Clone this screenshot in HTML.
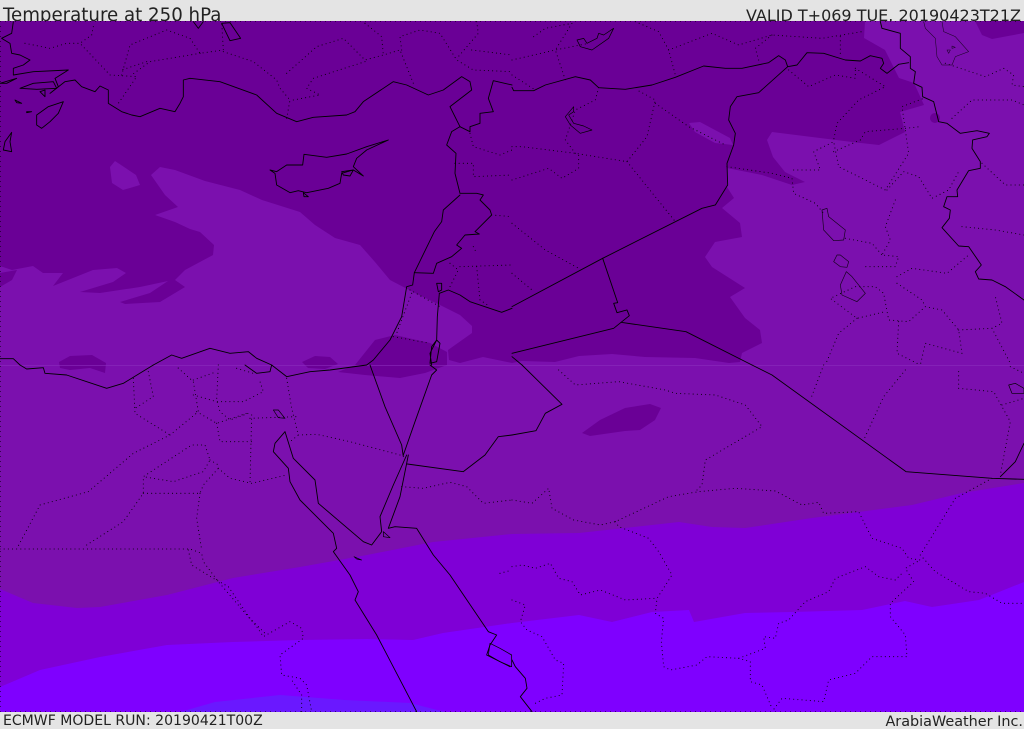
<!DOCTYPE html>
<html><head><meta charset="utf-8"><style>
html,body{margin:0;padding:0;background:#e4e4e4}
#p{position:relative;width:1024px;height:729px;overflow:hidden;background:#e4e4e4;font-family:"DejaVu Sans","Liberation Sans",sans-serif;color:#222}
.t{position:absolute;white-space:nowrap;line-height:1}
svg{position:absolute;left:0;top:21px}
</style></head><body><div id="p">
<div class="t" style="left:3px;top:7px;font-size:18.2px">Temperature at 250 hPa</div>
<div class="t" style="right:3px;top:8px;font-size:16px">VALID T+069 TUE. 20190423T21Z</div>
<div class="t" style="left:3px;top:714px;font-size:14.05px">ECMWF MODEL RUN: 20190421T00Z</div>
<div class="t" style="right:1px;top:715px;font-size:14.4px">ArabiaWeather Inc.</div>
<svg width="1024" height="691" viewBox="0 21 1024 691">
<rect x="0" y="21" width="1024" height="691" fill="#7f00ff"/>
<path fill="#6a18ff" d="M180,712 L215,702 L280,695 L345,700 L410,703 L445,712Z"/>
<path fill="#7f00d6" d="M0,21 H1024 V582 L979,600 L932,607 L905,601 L862,610 L792,612 L745,613 L694,622 L689,610 L652,612 L612,622 L579,615 L512,623 L443,633 L413,640 L367,639 L300,640 L233,642 L167,645 L100,657 L40,670 L0,687Z"/>
<path fill="#7b10ae" d="M0,21 H1024 V483 L962,493 L912,505 L812,518 L745,528 L712,527 L679,522 L579,533 L512,534 L433,542 L367,555 L300,567 L233,578 L167,595 L100,607 L77,608 L33,603 L0,589Z"/>
<path fill="#6a0096" d="M0,21 H865 L864,38 L885,50 L899,78 L914,83 L924,105 L900,112 L905,132 L879,145 L852,142 L812,137 L772,132 L767,140 L773,157 L785,172 L805,182 L792,185 L762,175 L727,168 L727,187 L734,198 L722,208 L740,223 L742,237 L715,242 L705,257 L712,267 L745,288 L730,297 L745,318 L760,330 L762,343 L742,353 L740,362 L729,363 L695,358 L645,357 L612,354 L579,356 L555,362 L522,361 L512,363 L483,357 L460,363 L449,360 L448,350 L472,333 L472,326 L460,315 L440,305 L415,293 L390,280 L375,262 L360,245 L335,238 L315,225 L300,212 L262,200 L240,190 L205,181 L175,170 L160,167 L151,175 L165,195 L178,207 L155,215 L175,222 L190,229 L200,232 L214,245 L213,255 L185,270 L175,280 L185,287 L160,302 L125,304 L120,302 L150,293 L168,281 L140,287 L100,293 L80,292 L113,282 L126,273 L117,268 L93,270 L53,286 L63,273 L43,273 L33,266 L12,270 L0,266Z"/>
<path fill="#6a0096" d="M0,273 L17,270 L12,280 L0,287Z"/>
<path fill="#6a0096" d="M59,362 L70,356 L92,355 L106,363 L105,373 L90,368 L70,370 L60,368Z"/>
<path fill="#6a0096" d="M302,362 L315,356 L330,357 L338,364 L325,369 L308,368Z"/>
<path fill="#6a0096" d="M338,372 L355,365 L375,340 L395,335 L430,343 L447,352 L447,365 L425,373 L400,378 L365,375Z"/>
<path fill="#6a0096" d="M582,433 L600,420 L625,408 L650,404 L661,408 L655,420 L640,430 L625,431 L590,436Z"/>
<path fill="#6a0096" d="M975,21 H1024 V33 L992,39 L982,35Z"/>
<ellipse cx="935" cy="118" rx="5" ry="5" fill="#6a0096"/>
<path fill="#7b10ae" d="M115,161 L136,175 L140,185 L123,190 L112,183 L110,167Z"/>
<path fill="#7b10ae" d="M689,123 L700,122 L730,138 L733,145 L715,143 L695,132Z"/>
<rect x="0" y="365" width="1024" height="1" fill="#8c2fc0" opacity=".55"/>

<g fill="none" stroke="#000" stroke-linejoin="round" stroke-linecap="round" transform="scale(.33333)" stroke-width="2.7">
<path d="M40,65 L35,100 L5,115 L30,130 L35,160 L60,165 L90,180 L70,195 L40,205 L40,225 L100,215 L205,210 L165,235 L175,260 L150,280 L195,245 L225,240 L245,260 L285,275 L300,258 L325,270 L325,310 L365,335 L395,345 L420,350 L480,325 L525,335 L540,310 L550,290 L550,240 L570,235 L660,245 L770,285 L830,340 L890,365 L940,352 L1040,345 L1065,335 L1090,305 L1180,245 L1220,255 L1285,285 L1330,270 L1385,230 L1410,245 L1415,270 L1350,320 L1380,380"/>
<path d="M190,305 L145,320 L110,345 L110,375 L125,385 L150,365 L175,340Z"/>
<path d="M60,265 L100,250 L160,245 L170,265 L110,268Z M0,250 L50,235 L20,250Z M120,275 L135,270 L135,290Z M45,300 L65,310 L50,308Z M80,335 L95,335 L80,338Z M35,397 L15,425 L10,450 L35,455 L30,425Z"/>
<path d="M810,510 L825,520 L830,555 L870,578 L895,572 L920,578 L985,565 L1020,550 L1025,520 L1060,510 L1090,528 L1060,500 L1070,475 L1100,450 L1165,420 L1100,440 L1040,462 L980,472 L912,463 L908,495 L860,495 L830,515Z"/>
<path d="M1025,515 L1060,510 L1050,528 L1030,525Z M910,578 L925,590 L912,590Z"/>
<path d="M1380,380 L1355,395 L1340,435 L1368,460 L1365,520 L1380,580 L1430,580 L1450,585 L1440,600 L1470,630 L1475,645 L1425,695 L1438,702 L1395,705 L1370,735 L1385,745 L1355,770 L1310,790 L1300,820 L1243,818"/>
<path d="M1380,585 L1330,630 L1325,665 L1303,695 L1243,818 L1238,855 L1220,860 L1205,950 L1170,1020 L1120,1080 L1100,1095"/>
<path d="M1318,880 L1312,950 L1310,1020 L1290,1060 L1295,1095 M1310,850 L1325,850 L1325,870 L1315,875Z M1310,1020 L1295,1040 L1290,1090 L1310,1085 L1320,1030Z"/>
<path d="M1318,880 L1345,870 L1380,885 L1410,905 L1505,937 L1536,925"/>
<path d="M1380,380 L1410,395 L1410,380 L1440,370 L1440,340 L1480,335 L1465,295 L1480,242 L1536,255"/>
<path d="M0,1076 L40,1076 L60,1095 M460,1095 L515,1065 L545,1075 L630,1045 L690,1060 L745,1055 L770,1075 L815,1095"/>
<path d="M665,70 L690,68 L722,115 L690,122Z M580,65 L595,85 L610,65"/>
</g>

<g fill="none" stroke="#000" stroke-linejoin="round" stroke-linecap="round" transform="translate(512,0) scale(.33333)" stroke-width="2.7">
<path d="M0,262 L5,272 L65,272 L100,255 L190,230 L235,240 L260,263 L340,268 L420,255 L490,232 L575,198 L640,205 L690,205 L770,188 L800,167 L820,180 L827,200 L855,195 L885,158 L935,160 L1000,180 L1045,183 L1075,167 L1110,175 L1115,190 L1105,205 L1125,220 L1160,193 L1190,188"/>
<path d="M1105,65 L1110,85 L1165,100 L1165,145 L1195,170 L1195,205 L1210,215 L1205,250 L1230,262 L1232,290 L1265,305 L1280,365 L1305,370 L1345,400 L1395,392 L1432,400 L1425,410 L1382,420 L1380,445 L1405,485 L1405,505 L1370,512 L1335,570 L1337,590 L1305,590 L1295,620 L1315,630 L1312,655 L1290,683 L1340,738 L1370,740 L1408,795 L1390,815 L1400,837 L1440,840 L1480,860 L1536,900"/>
<path d="M827,200 L740,278 L675,290 L655,320 L650,360 L670,400 L665,435 L645,490 L647,555 L610,615 L570,625 L272,775 L0,920"/>
<path d="M272,775 L317,908 L305,910 L315,938 L345,930 L352,947 L305,985 L0,1060 M327,967 L522,995 L720,1095 M0,1070 L30,1095"/>
<path d="M185,320 L160,350 L175,375 L205,400 L240,390 L215,378 L185,370 L170,345 L185,335Z" stroke-width="2"/>
<path d="M195,120 L215,115 L225,130 L255,115 L260,100 L275,105 L305,85 L290,115 L240,150 L205,140Z" stroke-width="2.2"/>
<path d="M1290,65 L1295,95 L1330,110 L1370,155 L1330,170 L1320,195 L1290,195 L1275,170 L1270,115 L1240,85 L1235,65 M1305,150 L1315,150 L1310,160Z M1320,138 L1330,142 L1320,145Z" stroke-width="1.6" opacity=".8"/>
<path d="M930,630 L945,625 L950,650 L1000,690 L995,720 L965,722 L935,690Z M975,765 L985,765 L1010,785 L1005,802 L985,800 L965,785Z M1003,815 L985,855 L990,885 L1035,905 L1060,880 L1020,830Z" stroke-width="2" opacity=".85"/>
</g>

<g fill="none" stroke="#000" stroke-linejoin="round" stroke-linecap="round" transform="translate(0,365) scale(.33333)" stroke-width="2.7">
<path d="M60,0 L80,12 L130,8 L135,25 L200,30 L320,70 L370,55 L460,0 M735,0 L770,25 L810,20 L815,0 L860,35 L930,20 L990,15 L1100,0"/>
<path d="M1110,0 L1155,125 L1205,240 L1210,275"/>
<path d="M855,200 L825,235 L820,260 L865,310 L870,350 L900,405 L1000,505 L1010,550 L1000,560 L1050,630 L1075,680 L1065,705 L1130,810 L1250,1040"/>
<path d="M855,200 L880,280 L945,345 L955,415 L1090,530 L1115,540 L1145,500 L1140,455 L1180,360 L1220,270"/>
<path d="M1225,270 L1200,395 L1165,490 L1185,485 L1250,490 L1300,570 L1350,630 L1465,800 L1490,810 L1470,840 L1460,870 L1530,905"/>
<path d="M1295,30 L1245,170 L1210,270 M1290,0 L1310,15 L1295,30"/>
<path d="M1222,297 L1390,320 L1455,270 L1495,215 L1536,210"/>
<path d="M820,135 L835,135 L855,160 L835,158Z M1150,500 L1170,518 L1150,515Z M1062,575 L1085,585 L1070,582Z" stroke-width="2"/>
<path d="M1470,835 L1500,850 L1535,870 L1535,905 L1500,890 L1465,870Z" stroke-width="2.2"/>
</g>

<g fill="none" stroke="#000" stroke-linejoin="round" stroke-linecap="round" transform="translate(512,365) scale(.33333)" stroke-width="2.7">
<path d="M0,210 L72,197 L100,145 L150,118 L30,0"/>
<path d="M720,0 L780,30 L1182,320 L1440,340 L1536,343 M1465,335 L1510,290 L1536,235"/>
<path d="M0,885 L10,905 L40,940 L45,970 L25,995 L60,1040"/>
<path d="M1490,60 L1510,55 L1536,70 L1536,85 L1500,85Z" stroke-width="2"/>
</g>

<g fill="none" stroke="#000" stroke-linecap="round" stroke-linejoin="round" stroke-width="3.2" stroke-dasharray="0 12.5">
<g transform="scale(.33333)">
<path d="M75,130 L150,145 L200,130 L240,130 L330,225 L410,230 L355,310 M280,80 L275,105 L240,130 M365,225 L390,135 L500,90 L570,115 L600,160 L670,150 L665,65 M600,160 L450,185 L395,225 M440,185 L365,210 M670,155 L760,185 L830,240 L840,265 L870,300 L860,355 M860,220 L950,140 L1030,115 L1095,180 L1150,165 L1200,150 L1240,250 M1095,185 L940,235 L920,265 L960,285 L880,300 M1095,70 L1145,110 L1150,165 M1205,150 L1200,110 L1260,90 L1320,100 L1370,180 L1420,210 L1536,215 M1430,65 L1435,100 L1375,170 M1415,150 L1536,165 M1410,400 L1420,440 L1500,465 L1536,450 M1365,490 L1420,490 L1420,530 L1536,525 M1475,645 L1536,650 M1350,790 L1375,810 L1350,860 M1430,800 L1440,900 L1470,920 M1380,800 L1536,795 M1230,870 L1320,920 M1235,880 L1190,1000 M1180,1010 L1290,1030 M1420,740 L1430,760"/>
</g>
<g transform="translate(512,0) scale(.33333)">
<path d="M0,180 L130,150 L230,130 M65,110 L100,85 L180,70 L130,150 L160,240 M0,225 L70,270 M370,65 L440,95 L470,150 L490,225 M470,150 L600,100 L680,135 L780,105 L930,115 L1050,95 M740,180 L730,145 L780,105 M985,110 L985,165 M260,263 L250,300 L190,330 L160,420 L190,460 M0,440 L30,440 L190,460 L345,485 L405,410 L430,300 L375,270 M430,310 L530,380 L640,435 M0,540 L110,505 L150,535 L200,505 L200,465 M345,485 L490,665 M0,670 L100,750 L200,805 M0,820 L60,870 M645,500 L780,520 L840,535 L845,580 L910,610 L935,640 M845,510 L925,510 L905,455 L965,425 L980,500 L1120,570 L1190,460 L1170,320 L1235,295 M965,455 L1045,420 L1060,395 L1180,385 L1225,380 M830,210 L890,260 L970,225 L1030,235 L1030,205 M1030,205 L1120,260 L1040,300 L975,370 L965,420 M1125,570 L1175,515 L1220,530 L1260,595 L1310,570 L1340,515 M1150,600 L1120,680 L1135,720 L1110,765 L1160,770 L1150,800 L1050,800 M1000,715 L1080,730 L1110,765 M1155,830 L1200,805 L1305,820 L1370,765 M1155,850 L1230,900 L1240,920 L1190,965 L1130,960 L1115,880 L1090,860 L1030,860 L955,895 L1035,955 L1120,935 M1035,955 L980,1000 L940,1095 M1160,965 L1155,1060 L1225,1095 M1240,920 L1290,930 L1340,990 L1350,1060 L1240,1030 L1225,1095 M1340,990 L1440,985 L1495,1090 M1440,985 L1470,970 L1450,890 M1350,680 L1450,690 L1536,705 M1320,355 L1380,300 L1500,300 L1536,315 M1300,190 L1420,230 L1475,205 L1505,225 L1500,255 L1536,260 M1410,490 L1480,555 L1536,555"/>
</g>
<g transform="translate(0,365) scale(.33333)">
<path d="M0,552 L570,552 L605,565 L610,590 L655,650 L770,785 L790,815 L870,770 L905,790 L910,820 L840,870 L845,930 L900,940 L920,960 L935,1040 M565,555 L575,600 L640,640 L685,665 L750,760 L800,810 M50,552 L120,420 L265,380 L400,265 L510,210 L595,140 L580,50 L530,5 M400,40 L405,145 L510,210 M445,20 L460,95 L405,130 M260,540 L370,470 L430,385 L430,335 L575,240 L615,240 L630,285 L610,320 L520,350 L430,335 M430,385 L600,385 L610,360 L655,310 M600,385 L590,460 L605,555 M655,310 L690,340 L755,355 L860,330 M630,285 L655,300 M650,175 L660,230 L755,230 M755,150 L750,355 M580,90 L650,110 L730,110 L790,80 L780,50 M590,140 L650,175 L740,145 M655,0 L650,105 L660,140 L690,165 L745,145 M860,40 L875,130 L895,210 L870,230 M750,160 L890,155 M895,210 L950,208 L1050,230 L1200,270 M710,10 L760,25 M580,45 L650,20 M1205,365 L1270,370 L1350,352 L1400,365 L1450,415 L1536,405 M905,1040 L905,990 L875,945 M1500,625 L1536,615"/>
</g>
<g transform="translate(512,365) scale(.33333)">
<path d="M0,405 L60,415 L110,370 L120,430 L185,465 L265,480 L310,470 L470,395 L560,380 L670,370 L790,378 L870,420 L920,412 L935,445 L1040,440 L1080,520 L1170,550 L1190,580 L1225,585 L1180,610 L1205,650 L1135,715 L1135,755 L1180,810 L1185,875 L1080,875 L1030,925 L950,945 L935,1010 L810,1000 L780,1040 M140,15 L190,60 L320,50 L460,75 L490,85 L610,90 L700,120 L750,185 L580,285 L570,360 L550,380 M310,470 L320,485 L410,520 L440,560 L480,630 L435,700 L430,745 L455,760 L448,830 L455,905 L475,915 L555,900 L585,875 L680,880 L760,850 L755,815 L790,820 L800,775 L830,765 L880,710 L950,680 L970,640 L1060,605 L1100,635 L1150,645 L1175,620 M1225,570 L1330,400 L1440,340 M1225,570 L1270,620 L1370,680 L1420,685 L1470,715 L1536,715 M680,880 L715,890 L715,950 L750,960 L780,1030 M0,605 L30,600 L70,610 L115,595 L140,640 L180,650 L205,690 L265,675 L340,705 L430,700 M0,705 L40,720 L25,770 L45,795 L90,815 L130,885 L155,895 L150,990 L100,1000 L60,1020 M935,0 L895,105 M1180,15 L1115,95 L1055,225 M1340,20 L1340,70 L1445,80 L1495,170 L1465,330 M1470,120 L1536,100 M1495,5 L1536,25"/>
</g>
</g>
<path d="M0,21.5 H1024 M0,711.5 H1024 M.5,21 V712" fill="none" stroke="#000" stroke-width="1" stroke-dasharray="1 4" opacity=".55"/>
</svg>
</div></body></html>
